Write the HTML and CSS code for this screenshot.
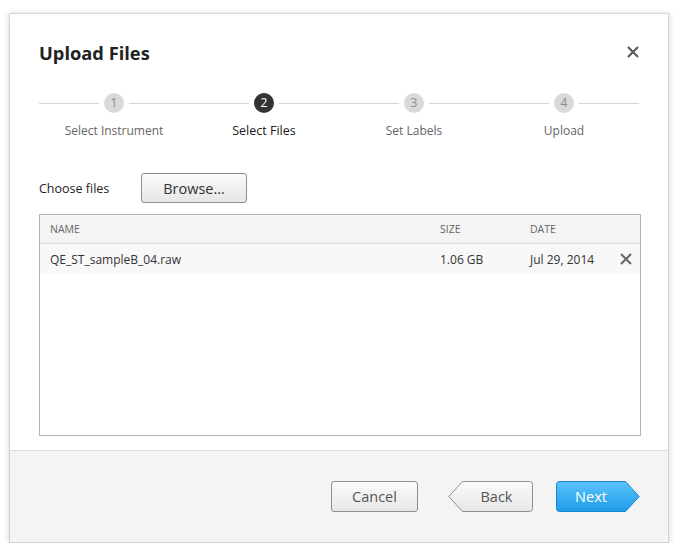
FILE: index.html
```html
<!DOCTYPE html>
<html>
<head>
<meta charset="utf-8">
<link rel="stylesheet" href="styles.css">
</head>
<body>
<div class="dialog">
  <div class="main">
    <div class="header">
      <h1 class="title">Upload Files</h1>
      <span class="close">
        <svg width="12" height="12" viewBox="0 0 12 12"><path d="M1 1L11 11M11 1L1 11" stroke="#555" stroke-width="2"/></svg>
      </span>
    </div>
    <div class="steps">
      <div class="step"><span class="num">1</span><span class="label">Select Instrument</span></div>
      <div class="step active"><span class="num">2</span><span class="label">Select Files</span></div>
      <div class="step"><span class="num">3</span><span class="label">Set Labels</span></div>
      <div class="step"><span class="num">4</span><span class="label">Upload</span></div>
    </div>
    <div class="choose">
      <span class="choose-label">Choose files</span>
      <button class="btn browse">Browse...</button>
    </div>
    <div class="table">
      <div class="thead">
        <span class="c-name">NAME</span>
        <span class="c-size">SIZE</span>
        <span class="c-date">DATE</span>
        <span class="c-x"></span>
      </div>
      <div class="row">
        <span class="c-name">QE_ST_sampleB_04.raw</span>
        <span class="c-size">1.06 GB</span>
        <span class="c-date">Jul 29, 2014</span>
        <span class="c-x"><svg width="12" height="12" viewBox="0 0 12 12"><path d="M1 1L11 11M11 1L1 11" stroke="#666" stroke-width="2"/></svg></span>
      </div>
    </div>
  </div>
  <div class="footer">
    <button class="btn cancel">Cancel</button>
    <button class="shape back">
      <svg class="bg" width="85" height="31" viewBox="0 0 85 31"><defs><linearGradient id="gb" x1="0" y1="0" x2="0" y2="1"><stop offset="0" stop-color="#fbfbfb"/><stop offset="1" stop-color="#e6e6e6"/></linearGradient></defs><path d="M14.5 0.5H81.5Q84.5 0.5 84.5 3.5V27.5Q84.5 30.5 81.5 30.5H14.5L0.8 15.5Z" fill="url(#gb)" stroke="#8e8e8e"/></svg>
      <span class="txt">Back</span>
    </button>
    <button class="shape next">
      <svg class="bg" width="84" height="31" viewBox="0 0 84 31"><defs><linearGradient id="gn" x1="0" y1="0" x2="0" y2="1"><stop offset="0" stop-color="#5cc3fb"/><stop offset="1" stop-color="#1d9ce8"/></linearGradient></defs><path d="M3.5 0.5H69.5L83.2 15.5L69.5 30.5H3.5Q0.5 30.5 0.5 27.5V3.5Q0.5 0.5 3.5 0.5Z" fill="url(#gn)" stroke="#1a86cc"/></svg>
      <span class="txt">Next</span>
    </button>
  </div>
</div>
</body>
</html>
```

FILE: styles.css
```css
html, body {
  margin: 0;
  padding: 0;
  background: #ffffff;
}
body {
  padding: 13px 0 0 9px;
  font-family: "Open Sans", "Noto Sans", sans-serif;
  color: #333;
}
.dialog {
  width: 660px;
  height: 530px;
  box-sizing: border-box;
  border: 1px solid #d4d4d4;
  box-shadow: 0 1px 6px rgba(0,0,0,0.18);
  background: #fff;
  display: flex;
  flex-direction: column;
}
.main {
  flex: 1;
  padding: 0 29px 0 29px;
  display: flex;
  flex-direction: column;
}
.header {
  display: flex;
  align-items: center;
  justify-content: space-between;
  height: 79px;
  box-sizing: border-box;
  padding-bottom: 3px;
}
.title {
  margin: 0;
  font-size: 18.3px;
  font-weight: 700;
  color: #222;
}
.close {
  display: flex;
  margin-right: 0;
}
.steps {
  display: flex;
  width: 600px;
}
.step {
  flex: 1;
  display: flex;
  flex-direction: column;
  align-items: center;
  position: relative;
}
.step::before {
  content: "";
  position: absolute;
  left: 0;
  right: 0;
  top: 10px;
  height: 1px;
  background: #d6d6d6;
}
.num {
  position: relative;
  width: 20px;
  height: 20px;
  border-radius: 50%;
  background: #d9d9d9;
  color: #8a8a8a;
  font-size: 12px;
  line-height: 20px;
  text-align: center;
  box-shadow: 0 0 0 5px #fff;
}
.step.active .num {
  background: #333;
  color: #fff;
}
.label {
  margin-top: 9px;
  font-size: 12px;
  color: #666;
  line-height: 17px;
}
.step.active .label {
  color: #222;
  font-size: 12.5px;
}
.choose {
  display: flex;
  align-items: center;
  margin-top: 34px;
  height: 30px;
}
.choose-label {
  font-size: 12.5px;
  color: #222;
  width: 102px;
}
.btn {
  height: 30px;
  box-sizing: border-box;
  border: 1px solid #8e8e8e;
  border-radius: 3px;
  background: linear-gradient(#fbfbfb, #e6e6e6);
  font-family: "Open Sans", "Noto Sans", sans-serif;
  font-size: 14.5px;
  color: #333;
  padding: 0;
}
.browse {
  width: 106px;
}
.table {
  margin-top: 11px;
  width: 602px;
  height: 222px;
  box-sizing: border-box;
  border: 1px solid #b3b3b3;
}
.thead, .row {
  display: flex;
  align-items: center;
  padding-left: 10px;
}
.thead {
  height: 28px;
  background: #f4f4f4;
  border-bottom: 1px solid #dcdcdc;
  font-size: 10.5px;
  color: #666;
}
.row {
  height: 30px;
  background: #f8f8f8;
  font-size: 12px;
  color: #333;
}
.c-name { width: 390px; }
.c-size { width: 90px; }
.c-date { width: 90px; }
.c-x { display: flex; align-items: center; }
.footer {
  height: 90px;
  flex: none;
  border-top: 1px solid #dcdcdc;
  background: #f4f4f4;
  display: flex;
  align-items: center;
  justify-content: flex-end;
  padding-right: 28px;
  padding-bottom: 1px;
}
.cancel {
  width: 87px;
  height: 31px;
  color: #555;
  margin-right: 30px;
}
.shape {
  position: relative;
  height: 31px;
  border: 0;
  background: none;
  padding: 0;
  font-family: "Open Sans", "Noto Sans", sans-serif;
  font-size: 14.5px;
  display: flex;
  align-items: center;
  justify-content: center;
}
.shape .bg {
  position: absolute;
  left: 0;
  top: 0;
}
.shape .txt {
  position: relative;
}
.back {
  width: 85px;
  color: #555;
  padding-left: 12px;
  margin-right: 23px;
}
.next {
  width: 84px;
  color: #fff;
  padding-right: 14px;
}
```
